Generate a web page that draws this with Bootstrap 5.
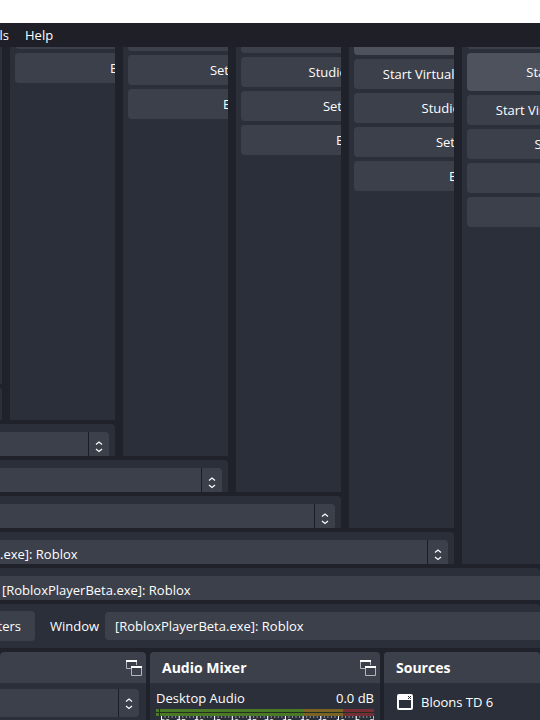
<!DOCTYPE html>
<html lang="en">
<head>
<meta charset="utf-8">
<meta name="viewport" content="width=device-width, initial-scale=1">
<title>OBS Studio</title>
<link href="https://cdn.jsdelivr.net/npm/bootstrap@5.3.0/dist/css/bootstrap.min.css" rel="stylesheet">
<style>
:root { --base: #1f212b; --panel: #2b2f39; --ctl: #3c404b; --ctl-on: #4e525d; }
body { background: var(--base); color: #fefefe; font: 13px/18px "Open Sans", "Noto Sans", sans-serif; }
.desk-gap { height: 23px; }
.menu-strip { height: 24px; background: #1f1f27; }
.menu-strip a { color: inherit; }
.menu-first { width: 34px; margin-left: -25px; }
.trail-gap { gap: 4px; }
.col-gap { gap: 8px; }
.controls-panel { background: var(--panel); width: 105px; padding-left: 5px; }
.last-panel { contain: inline-size; }
.edge-panel { background: var(--panel); width: 2px; height: 337px; }
.edge-strip { background: var(--panel); width: 2px; height: 32px; border-top-right-radius: 2px; }
.stack { width: 212px; gap: 4px; }
.lift-24 { margin-top: -24px; }
.lift-26 { margin-top: -26px; }
.lift-28 { margin-top: -28px; }
.lift-30 { margin-top: -30px; }
.ctl { background: var(--ctl); color: inherit; font: inherit; border: 0; border-radius: 4px; height: 30px; padding: 0 14px; white-space: nowrap; }
.ctl-on { background: var(--ctl-on); height: 38px; }
.ctl-cam { width: 180px; }
.src-strip { background: var(--panel); height: 32px; padding: 8px 6px 0 0; border-top-right-radius: 4px; contain: inline-size; }
.src-last { height: 44px; padding: 7px 6px 7px 0; }
.picker { appearance: none; flex: none; width: 569px; height: 28px; padding: 0 30px 0 10px; border: 0; border-radius: 4px; color: inherit; font: inherit;
  background: var(--ctl) url("data:image/svg+xml,%3Csvg xmlns='http://www.w3.org/2000/svg' width='21' height='28'%3E%3Cpath d='M.5 0V28' stroke='%231b1c26'/%3E%3Cpath d='M8 12.500L11 10l3 2.500M8 17L11 19.500l3-2.500' fill='none' stroke='%23fefefe' stroke-width='1.200'/%3E%3C/svg%3E") no-repeat right top; }
.from-left { margin-left: -8px; }
.btn-filters { width: 80px; margin-left: -45px; }
.win-label { margin: 0 5px 0 15px; width: 50px; white-space: nowrap; }
.dock { background: var(--panel); border-radius: 4px 4px 0 0; }
.dock-scenes { width: 146px; }
.dock-mixer { width: 230px; }
.dock-head { background: var(--ctl); height: 31px; padding: 0 4px 0 12px; border-radius: 4px 4px 0 0; font-size: 14px; font-weight: 700; }
.scene-row { padding: 6px 7px 0 0; }
.mix-row { padding: 6px 6px 2px; }
.src-item { padding: 10px 12px 0; gap: 7px; }
.meter { display: block; width: 218px; height: 30px; margin: 0 6px; }
.meter text { font-size: 9px; fill: #fefefe; }
</style>
<script src="https://cdn.jsdelivr.net/npm/bootstrap@5.3.0/dist/js/bootstrap.bundle.min.js"></script>
</head>
<body class="vh-100 overflow-hidden d-flex flex-column">
<div class="desk-gap bg-white flex-shrink-0"></div>
<nav class="menu-strip d-flex align-items-center gap-3 flex-shrink-0">
  <a href="#" class="menu-first text-end text-decoration-none">Tools</a>
  <a href="#" class="text-decoration-none">Help</a>
</nav>

<main class="d-flex flex-column trail-gap flex-shrink-0">
 <div class="d-flex col-gap">
  <div class="d-flex flex-column trail-gap">
   <div class="d-flex col-gap">
    <div class="d-flex flex-column trail-gap">
     <div class="d-flex col-gap">
      <div class="d-flex flex-column trail-gap">
       <div class="d-flex col-gap">
        <div class="d-flex flex-column trail-gap">
         <div class="d-flex col-gap">
          <div class="d-flex flex-column trail-gap">
           <div class="edge-panel"></div>
           <div class="edge-strip"></div>
          </div>
          <div class="controls-panel overflow-hidden">
           <div class="stack lift-28 d-flex flex-column">
            <button class="ctl">Settings</button>
            <button class="ctl">Exit</button>
           </div>
          </div>
         </div>
         <div class="src-strip d-flex justify-content-end overflow-hidden">
          <select class="picker" aria-label="Window"><option>[RobloxPlayerBeta.exe]: Roblox</option></select>
         </div>
        </div>
        <div class="controls-panel overflow-hidden">
         <div class="stack lift-26 d-flex flex-column">
          <button class="ctl">Studio Mode</button>
          <button class="ctl">Settings</button>
          <button class="ctl">Exit</button>
         </div>
        </div>
       </div>
       <div class="src-strip d-flex justify-content-end overflow-hidden">
        <select class="picker" aria-label="Window"><option>[RobloxPlayerBeta.exe]: Roblox</option></select>
       </div>
      </div>
      <div class="controls-panel overflow-hidden">
       <div class="stack lift-24 d-flex flex-column">
        <button class="ctl ctl-cam">Start Virtual Camera</button>
        <button class="ctl">Studio Mode</button>
        <button class="ctl">Settings</button>
        <button class="ctl">Exit</button>
       </div>
      </div>
     </div>
     <div class="src-strip d-flex justify-content-end overflow-hidden">
      <select class="picker" aria-label="Window"><option>[RobloxPlayerBeta.exe]: Roblox</option></select>
     </div>
    </div>
    <div class="controls-panel overflow-hidden">
     <div class="stack lift-30 d-flex flex-column">
      <button class="ctl ctl-on">Start Recording</button>
      <button class="ctl ctl-cam">Start Virtual Camera</button>
      <button class="ctl">Studio Mode</button>
      <button class="ctl">Settings</button>
      <button class="ctl">Exit</button>
     </div>
    </div>
   </div>
   <div class="src-strip d-flex justify-content-end overflow-hidden">
    <select class="picker" aria-label="Window"><option>[RobloxPlayerBeta.exe]: Roblox</option></select>
   </div>
  </div>
  <div class="controls-panel last-panel flex-grow-1 overflow-hidden">
   <div class="stack lift-28 d-flex flex-column">
    <button class="ctl">Start Streaming</button>
    <button class="ctl ctl-on">Start Recording</button>
    <button class="ctl ctl-cam">Start Virtual Camera</button>
    <button class="ctl">Studio Mode</button>
    <button class="ctl">Settings</button>
    <button class="ctl">Exit</button>
   </div>
  </div>
 </div>
 <div class="src-strip d-flex overflow-hidden">
  <select class="picker from-left" aria-label="Window"><option>[RobloxPlayerBeta.exe]: Roblox</option></select>
 </div>
 <div class="src-strip src-last d-flex align-items-center overflow-hidden">
  <button class="ctl btn-filters text-end flex-shrink-0">Filters</button>
  <label class="win-label flex-shrink-0" for="win">Window</label>
  <select class="picker" id="win"><option>[RobloxPlayerBeta.exe]: Roblox</option></select>
 </div>
</main>

<div class="d-flex trail-gap flex-grow-1 pt-1 overflow-hidden">
 <section class="dock dock-scenes flex-shrink-0 overflow-hidden">
  <div class="dock-head d-flex align-items-center justify-content-end">
   <svg width="16" height="16" viewBox="0 0 16 16" fill="none" stroke="#b4b6bc"><path d="M5 8.500H.5V1M10.500 1v4M5.500 7v8.500h10V7"/><path d="M0 1h11M5 7h11" stroke="#fefefe" stroke-width="2"/></svg>
  </div>
  <div class="scene-row d-flex justify-content-end"><select class="picker" aria-label="Transition"><option></option></select></div>
 </section>
 <section class="dock dock-mixer flex-shrink-0">
  <div class="dock-head d-flex align-items-center justify-content-between">Audio Mixer
   <svg width="16" height="16" viewBox="0 0 16 16" fill="none" stroke="#b4b6bc"><path d="M5 8.500H.5V1M10.500 1v4M5.500 7v8.500h10V7"/><path d="M0 1h11M5 7h11" stroke="#fefefe" stroke-width="2"/></svg>
  </div>
  <div class="mix-row d-flex justify-content-between"><span>Desktop Audio</span><span>0.0 dB</span></div>
  <svg class="meter" viewBox="0 0 218 30">
   <path d="M0 0h147v7H0z" fill="#4a7a26"/><path d="M147 0h40v7h-40z" fill="#7b6326"/><path d="M187 0h31v7h-31z" fill="#762d36"/>
   <path d="M0 3.500h218M3.500 0v7" stroke="#23301f"/>
   <path d="M5 8H218" stroke="#8b8e96" stroke-width="2" stroke-dasharray="1 2.540"/>
   <path d="M5 9H218" stroke="#fefefe" stroke-width="4" stroke-dasharray="1 16.700"/>
   <text x="1" y="17">-60</text><text x="17" y="17">-55</text><text x="35" y="17">-50</text><text x="52" y="17">-45</text><text x="70" y="17">-40</text><text x="88" y="17">-35</text><text x="105" y="17">-30</text><text x="123" y="17">-25</text><text x="141" y="17">-20</text><text x="158" y="17">-15</text><text x="176" y="17">-10</text><text x="196" y="17">-5</text><text x="213" y="17">0</text>
  </svg>
 </section>
 <section class="dock flex-grow-1">
  <div class="dock-head d-flex align-items-center">Sources</div>
  <div class="src-item d-flex align-items-center">
   <svg width="18" height="18" viewBox="0 0 18 18"><path fill="#fefefe" fill-rule="evenodd" d="M3 1h12a2 2 0 0 1 2 2v12a2 2 0 0 1-2 2H3a2 2 0 0 1-2-2V3a2 2 0 0 1 2-2zM3 7v8h12V7z"/><path d="M12 3l3 3M15 3l-3 3" stroke="#2b2e38"/></svg>
   <span>Bloons TD 6</span>
  </div>
 </section>
</div>
</body>
</html>
